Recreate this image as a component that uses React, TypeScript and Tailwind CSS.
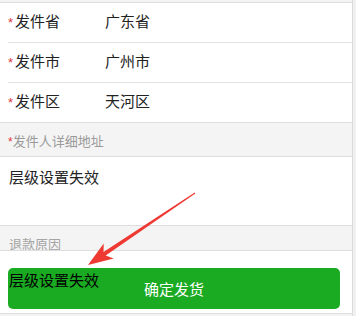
import React from "react";

const rows = [
  { label: "发件省", value: "广东省" },
  { label: "发件市", value: "广州市" },
  { label: "发件区", value: "天河区" },
];

function Arrow() {
  return (
    <svg className="absolute left-0 top-0 pointer-events-none" width="356" height="316" viewBox="0 0 356 316">
      <polygon
        points="195.3,193.4 105.7,255.5 113.7,258.5 88,265 103.7,243.5 103.5,252.1 194.7,192.6"
        fill="#ee3a33"
      />
    </svg>
  );
}

export default function App() {
  return (
    <div
      className="relative w-[356px] h-[316px] overflow-hidden bg-[#f4f4f4] flex"
      style={{ fontFamily: '"Liberation Sans", "Noto Sans CJK SC", sans-serif' }}
    >
      <div className="w-[352px] flex flex-col">
        <div className="h-[2px] bg-[#f4f4f4]" />
        <div className="bg-white border-t border-b border-[#dedede]">
          {rows.map((r, i) => (
            <div key={r.label} className={i > 0 ? "pl-2" : ""}>
              <div className={i > 0 ? "border-t border-[#e2e2e2]" : ""}>
                <div className={`h-[39px] flex items-center text-[15px] text-[#222] ${i > 0 ? "" : "pl-2"}`}>
                  <span className="text-[#e03a3a] text-[13px] w-[7px]">*</span>
                  <span className="w-[90px]">{r.label}</span>
                  <span>{r.value}</span>
                </div>
              </div>
            </div>
          ))}
        </div>
        <div className="h-[33px] flex items-end pl-2 pb-[5px] text-[13px] text-[#9a9a9a]">
          <span className="text-[#e03a3a] text-[12px]">*</span>
          <span>发件人详细地址</span>
        </div>
        <div className="h-[70px] bg-white border-t border-b border-[#dedede] px-[9px] pt-[11px] text-[15px] leading-[20px] text-[#222]">
          层级设置失效
        </div>
        <div className="h-[24px] overflow-hidden pl-[9px] pt-[10px] text-[13px] leading-[18px] text-[#a5a5a5]">
          退款原因
        </div>
        <div className="relative bg-white border-t border-b border-[#dedede] pt-[17px] pb-[4px] pl-2 pr-3">
          <button className="w-full h-[41px] rounded-[5px] bg-[#1bab22] text-white text-[15px] flex items-center justify-center pt-[4px]">
            确定发货
          </button>
          <div className="absolute left-[9px] top-[20px] text-[15px] leading-[20px] text-black">层级设置失效</div>
        </div>
      </div>
      <div className="w-[4px] border-l border-[#dcdcdc] bg-[#f0f0f0]" />
      <Arrow />
    </div>
  );
}
